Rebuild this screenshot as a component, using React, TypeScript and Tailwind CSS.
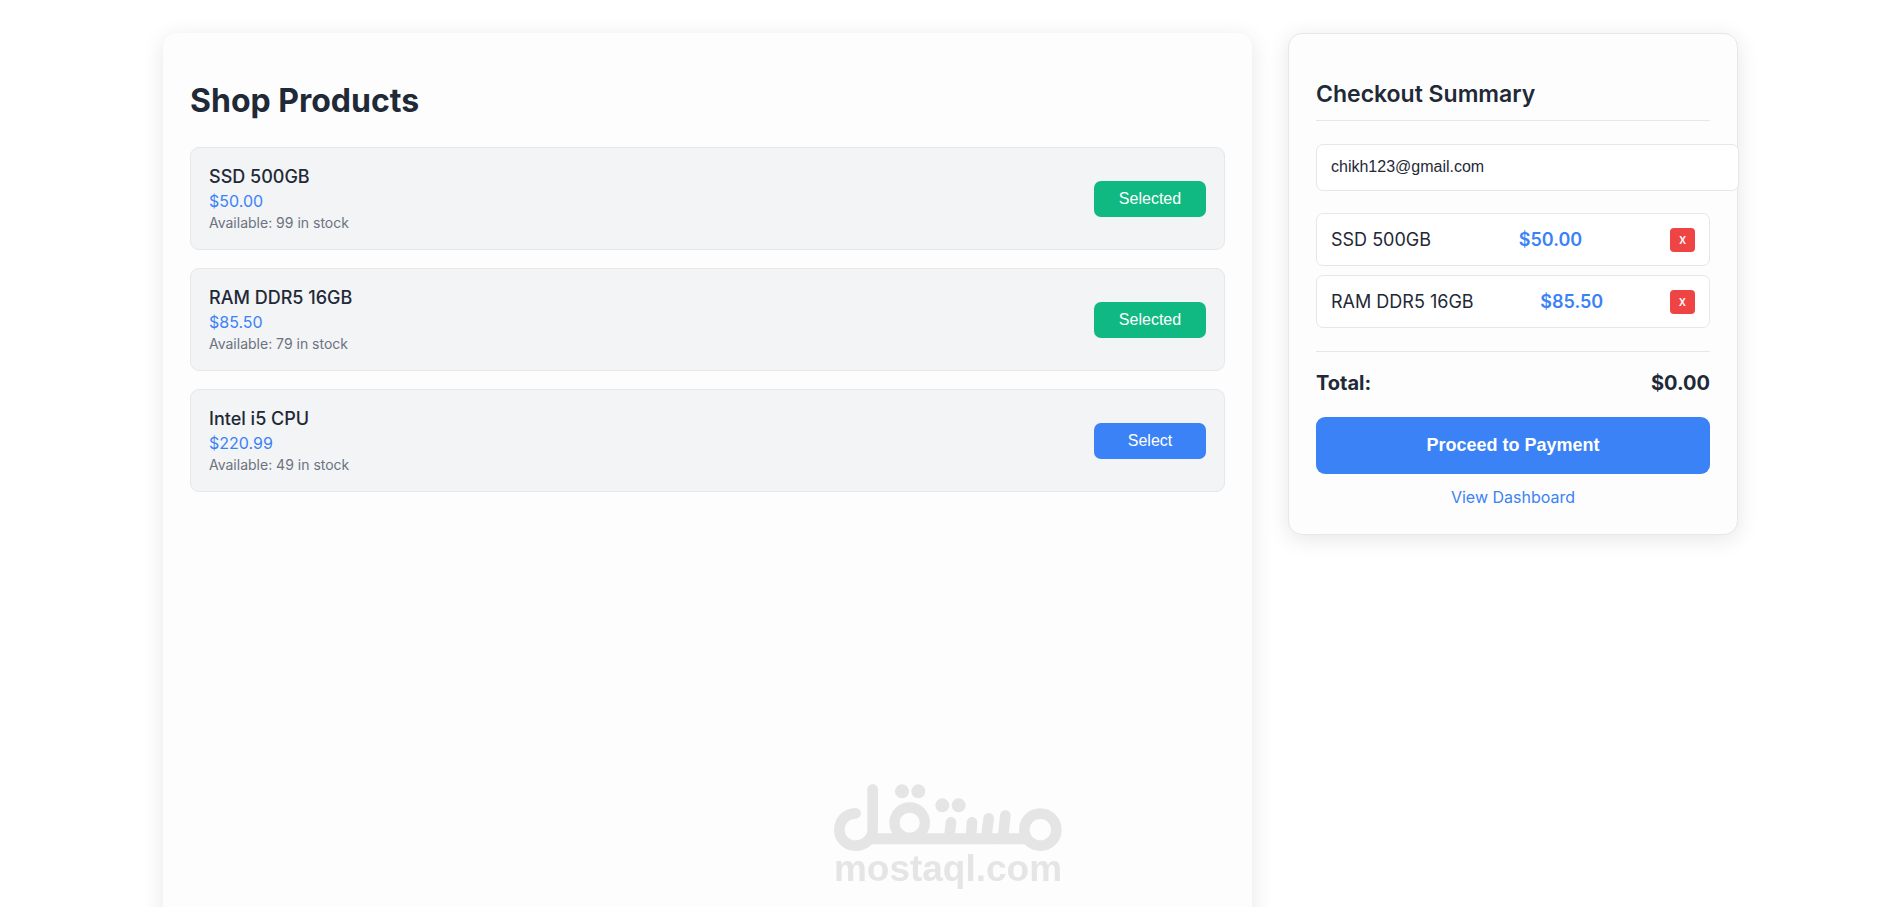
import { useState } from 'react';
import clsx from 'clsx';

type Product = { id: number; name: string; price: number; stock: number };

const products: Product[] = [
  { id: 1, name: 'SSD 500GB', price: 50, stock: 99 },
  { id: 2, name: 'RAM DDR5 16GB', price: 85.5, stock: 79 },
  { id: 3, name: 'Intel i5 CPU', price: 220.99, stock: 49 },
];

const formatPrice = (value: number) => `$${value.toFixed(2)}`;

function ProductCard({ product, selected, onToggle }: { product: Product; selected: boolean; onToggle: () => void }) {
  return (
    <li className="flex items-center justify-between rounded-[9px] border border-[#e5e7eb] bg-[#f3f4f6] px-[18px] py-4">
      <div>
        <h3 className="text-[18px] leading-[25px] font-medium">{product.name}</h3>
        <p className="text-[16px] leading-[24px] text-[#3b82f6]">{formatPrice(product.price)}</p>
        <p className="text-[14px] leading-[20px] text-[#6b7280]">Available: {product.stock} in stock</p>
      </div>
      <button
        type="button"
        onClick={onToggle}
        className={clsx(
          'h-9 w-28 rounded-[7px] font-["Liberation_Sans",sans-serif] text-[16px] text-white',
          selected ? 'bg-[#10b981]' : 'bg-[#3b82f6]',
        )}
      >
        {selected ? 'Selected' : 'Select'}
      </button>
    </li>
  );
}

function Watermark() {
  return (
    <div className="pointer-events-none fixed inset-x-0 bottom-[21px] flex flex-col items-center text-[#e5e5e5]">
      <svg width="228" height="68" viewBox="72 71 684 204" fill="none" stroke="currentColor" strokeLinecap="round">
        <path d="M137 159C108 159 88 182 88 208A48 48 0 0 0 136 256A52 48 0 0 0 188 208V87" strokeWidth="32" />
        <path d="M185 235.5H650" strokeWidth="33" strokeLinecap="butt" />
        <circle cx="299" cy="187" r="45.5" strokeWidth="31" />
        <circle cx="691" cy="208" r="48" strokeWidth="32" />
        <path d="M423 186L418 230M486 186L483 230M536 174L529 230M586 166L579 230" strokeWidth="32" />
        <g fill="currentColor" stroke="none">
          <circle cx="276" cy="93" r="21" />
          <circle cx="325" cy="93" r="21" />
          <circle cx="397" cy="135" r="21" />
          <circle cx="446" cy="135" r="21" />
        </g>
      </svg>
      <span className="font-['Liberation_Sans',sans-serif] text-[37px] leading-[34px] font-bold">mostaql.com</span>
    </div>
  );
}

export default function App() {
  const [email, setEmail] = useState('chikh123@gmail.com');
  const [selectedIds, setSelectedIds] = useState<number[]>([1, 2]);

  const toggle = (id: number) =>
    setSelectedIds(ids => (ids.includes(id) ? ids.filter(i => i !== id) : [...ids, id]));

  const selected = products.filter(p => selectedIds.includes(p.id));

  return (
    <div className="min-h-screen bg-white font-['Inter',sans-serif] text-[#1f2937]">
      <div className="mx-auto flex w-full max-w-[1580px] items-start gap-9 pt-[33px] pl-[5px]">
        <main className="min-h-screen flex-1 rounded-[14px] bg-[#fdfdfd] px-[27px] pt-[45px] pb-[27px] shadow-[0_4px_22px_rgba(0,0,0,0.1)]">
          <h1 className="text-[32px] leading-[45px] font-bold">Shop Products</h1>
          <ul className="mt-6 flex flex-col gap-[18px]">
            {products.map(p => (
              <ProductCard key={p.id} product={p} selected={selectedIds.includes(p.id)} onToggle={() => toggle(p.id)} />
            ))}
          </ul>
        </main>

        <aside className="w-[450px] shrink-0 rounded-[14px] border border-[#e5e7eb] bg-[#fdfdfd] px-[27px] pt-11 pb-[25px] shadow-[0_4px_22px_rgba(0,0,0,0.1)]">
          <h2 className="border-b border-[#e5e7eb] pb-[10px] text-[23px] leading-8 font-semibold">Checkout Summary</h2>
          <input
            type="email"
            aria-label="Email"
            value={email}
            onChange={e => setEmail(e.target.value)}
            className="mt-[23px] block h-[47px] w-[423px] rounded-[7px] border border-[#e5e7eb] bg-white px-[14px] pb-0.5 font-['Liberation_Sans',sans-serif] text-[16px] outline-none"
          />
          <ul className="mt-[22px] flex flex-col gap-[9px]">
            {selected.map(p => (
              <li key={p.id} className="flex h-[53px] items-center justify-between rounded-[7px] border border-[#e5e7eb] bg-white px-[14px] text-[18px]">
                <span>{p.name}</span>
                <span className="font-semibold text-[#3b82f6]">{formatPrice(p.price)}</span>
                <button
                  type="button"
                  aria-label={`Remove ${p.name}`}
                  onClick={() => toggle(p.id)}
                  className="h-6 w-[25px] rounded-[4px] bg-[#ef4444] text-[13px] leading-none font-medium text-white"
                >
                  x
                </button>
              </li>
            ))}
          </ul>
          <div className="mt-[23px] flex justify-between border-t border-[#e5e7eb] pt-[17px] text-[20px] leading-[28px] font-bold">
            <span>Total:</span>
            <span>$0.00</span>
          </div>
          <button type="button" className="mt-5 h-[57px] w-full rounded-[9px] bg-[#3b82f6] font-['Liberation_Sans',sans-serif] text-[18px] font-bold text-white">
            Proceed to Payment
          </button>
          <a href="#dashboard" className="mt-[11px] block text-center text-[16px] leading-6 text-[#3b82f6]">
            View Dashboard
          </a>
        </aside>
      </div>
      <Watermark />
    </div>
  );
}
